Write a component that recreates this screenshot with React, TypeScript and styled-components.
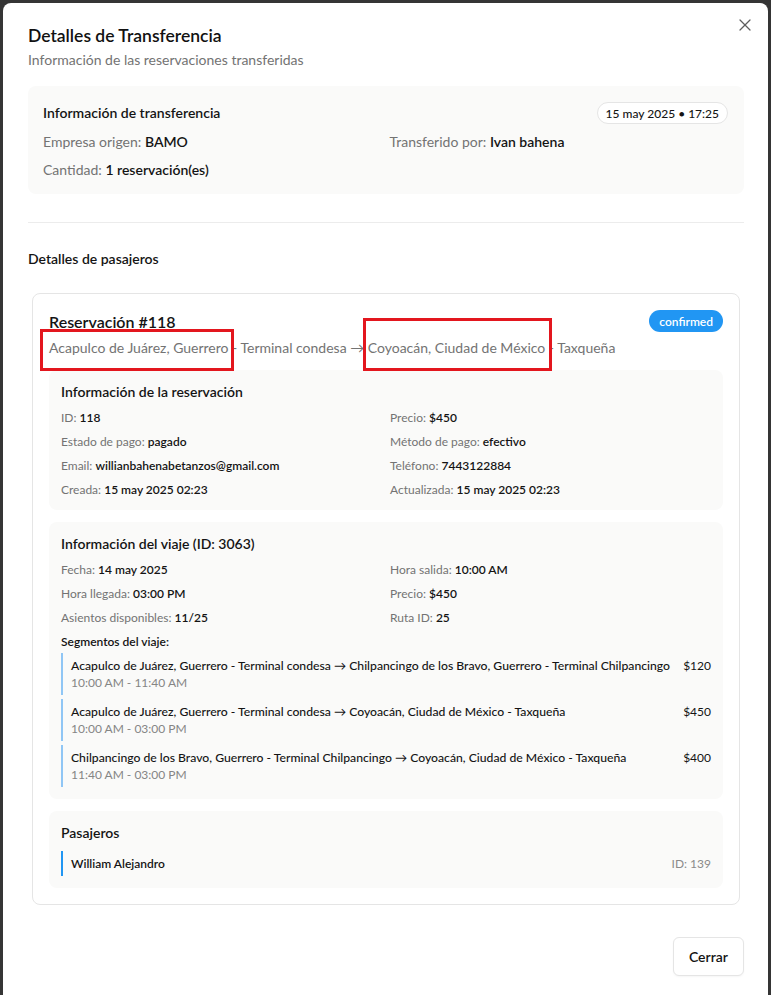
import React from 'react';
import styled, { createGlobalStyle } from 'styled-components';
import { X } from 'lucide-react';

const GlobalStyle = createGlobalStyle`
	html, body {
		margin: 0;
		padding: 0;
		background: #353535;
	}
	body {
		font-family: Lato, 'Liberation Sans', Arial, sans-serif;
		color: #141414;
	}
	* {
		box-sizing: border-box;
	}
`;

const reservationRows = [
	['ID', '118', 'Precio', '$450'],
	['Estado de pago', 'pagado', 'Método de pago', 'efectivo'],
	['Email', 'willianbahenabetanzos@gmail.com', 'Teléfono', '7443122884'],
	['Creada', '15 may 2025 02:23', 'Actualizada', '15 may 2025 02:23'],
];

const tripRows = [
	['Fecha', '14 may 2025', 'Hora salida', '10:00 AM'],
	['Hora llegada', '03:00 PM', 'Precio', '$450'],
	['Asientos disponibles', '11/25', 'Ruta ID', '25'],
];

const segments = [
	{
		route: 'Acapulco de Juárez, Guerrero - Terminal condesa → Chilpancingo de los Bravo, Guerrero - Terminal Chilpancingo',
		time: '10:00 AM - 11:40 AM',
		price: '$120',
	},
	{
		route: 'Acapulco de Juárez, Guerrero - Terminal condesa → Coyoacán, Ciudad de México - Taxqueña',
		time: '10:00 AM - 03:00 PM',
		price: '$450',
	},
	{
		route: 'Chilpancingo de los Bravo, Guerrero - Terminal Chilpancingo → Coyoacán, Ciudad de México - Taxqueña',
		time: '11:40 AM - 03:00 PM',
		price: '$400',
	},
];

const App = () => {
	return (
		<Page>
			<GlobalStyle />
			<Modal>
				<CloseButton aria-label="Cerrar">
					<X size={20} strokeWidth={1.5} />
				</CloseButton>
				<Title>Detalles de Transferencia</Title>
				<Subtitle>Información de las reservaciones transferidas</Subtitle>

				<TransferCard>
					<CardHead>
						<CardTitle>Información de transferencia</CardTitle>
						<DateBadge>15 may 2025 • 17:25</DateBadge>
					</CardHead>
					<TransferGrid>
						<Field $size={14}>
							<Label>Empresa origen: </Label>
							<Value>BAMO</Value>
						</Field>
						<Field $size={14}>
							<Label>Transferido por: </Label>
							<Value>Ivan bahena</Value>
						</Field>
						<Field $size={14}>
							<Label>Cantidad: </Label>
							<Value>1 reservación(es)</Value>
						</Field>
					</TransferGrid>
				</TransferCard>

				<Divider />

				<SectionTitle>Detalles de pasajeros</SectionTitle>

				<List>
					<ReservationCard>
						<ResHead>
							<ResTitle>Reservación #118</ResTitle>
							<StatusBadge>confirmed</StatusBadge>
						</ResHead>
						<Route>Acapulco de Juárez, Guerrero - Terminal condesa → Coyoacán, Ciudad de México - Taxqueña</Route>

						<InfoBox>
							<BoxTitle>Información de la reservación</BoxTitle>
							<InfoGrid>
								{reservationRows.map(([l1, v1, l2, v2]) => (
									<React.Fragment key={l1}>
										<Field $size={12}>
											<Label>{l1}: </Label>
											<Value>{v1}</Value>
										</Field>
										<Field $size={12}>
											<Label>{l2}: </Label>
											<Value>{v2}</Value>
										</Field>
									</React.Fragment>
								))}
							</InfoGrid>
						</InfoBox>

						<InfoBox>
							<BoxTitle>Información del viaje (ID: 3063)</BoxTitle>
							<InfoGrid>
								{tripRows.map(([l1, v1, l2, v2]) => (
									<React.Fragment key={l1}>
										<Field $size={12}>
											<Label>{l1}: </Label>
											<Value>{v1}</Value>
										</Field>
										<Field $size={12}>
											<Label>{l2}: </Label>
											<Value>{v2}</Value>
										</Field>
									</React.Fragment>
								))}
							</InfoGrid>
							<SegmentsLabel>Segmentos del viaje:</SegmentsLabel>
							<Segments>
								{segments.map((s) => (
									<Segment key={s.route}>
										<SegmentText>
											<SegmentRoute>{s.route}</SegmentRoute>
											<SegmentTime>{s.time}</SegmentTime>
										</SegmentText>
										<SegmentPrice>{s.price}</SegmentPrice>
									</Segment>
								))}
							</Segments>
						</InfoBox>

						<InfoBox>
							<BoxTitle>Pasajeros</BoxTitle>
							<PassengerRow>
								<PassengerName>William Alejandro</PassengerName>
								<PassengerId>ID: 139</PassengerId>
							</PassengerRow>
						</InfoBox>

						{/* red annotation boxes from the screenshot */}
						<Highlight $left={7} $top={35} $width={194} $height={42} />
						<Highlight $left={330} $top={24} $width={189} $height={53} />
					</ReservationCard>
				</List>

				<Footer>
					<CloseAction>Cerrar</CloseAction>
				</Footer>
			</Modal>
		</Page>
	);
};

export default App;

const Page = styled.div`
	padding: 3px 3px 0;
	min-height: 100vh;
`;

const Modal = styled.div`
	position: relative;
	background: #ffffff;
	border-radius: 8px 8px 0 0;
	padding: 19px 24px 19px 25px;
	min-height: 992px;
`;

const CloseButton = styled.button`
	position: absolute;
	top: 12px;
	right: 13px;
	width: 20px;
	height: 20px;
	padding: 0;
	border: none;
	background: transparent;
	color: #5f5f5f;
	display: flex;
	align-items: center;
	justify-content: center;
	cursor: pointer;
`;

const Title = styled.h2`
	margin: 0;
	font-size: 17.5px;
	line-height: 27px;
	font-weight: 600;
	color: #111;
`;

const Subtitle = styled.p`
	margin: 1px 0 0;
	font-size: 14px;
	line-height: 20px;
	color: #737373;
`;

const TransferCard = styled.div`
	margin-top: 16px;
	background: #fafaf9;
	border-radius: 8px;
	padding: 16px 16px 14px 15px;
`;

const CardHead = styled.div`
	display: flex;
	justify-content: space-between;
	align-items: center;
	height: 22px;
`;

const CardTitle = styled.h3`
	margin: 0;
	font-size: 14px;
	line-height: 20px;
	font-weight: 600;
	color: #141414;
`;

const DateBadge = styled.span`
	display: inline-flex;
	align-items: center;
	height: 22px;
	padding: 0 8px;
	border: 1px solid #e5e5e5;
	border-radius: 999px;
	background: #fff;
	font-size: 12px;
	font-weight: 500;
	color: #141414;
`;

const TransferGrid = styled.div`
	display: grid;
	grid-template-columns: 1fr 1fr;
	gap: 8px;
	margin-top: 8px;
`;

const Field = styled.div<{ $size: number }>`
	font-size: ${(p) => p.$size}px;
	line-height: ${(p) => (p.$size > 12 ? 20 : 16)}px;
	white-space: nowrap;
`;

const Label = styled.span`
	color: #737373;
`;

const Value = styled.span`
	color: #141414;
	font-weight: 600;
`;

const Divider = styled.hr`
	margin: 28px 0 26px;
	border: none;
	height: 1px;
	background: #ececec;
`;

const SectionTitle = styled.h3`
	margin: 0 0 24px;
	font-size: 14px;
	line-height: 20px;
	font-weight: 600;
	color: #141414;
`;

const List = styled.div`
	padding: 0 4px;
`;

const ReservationCard = styled.div`
	position: relative;
	border: 1px solid #e5e5e5;
	border-radius: 8px;
	padding: 16px;
`;

const ResHead = styled.div`
	display: flex;
	justify-content: space-between;
	align-items: flex-start;
`;

const ResTitle = styled.h4`
	margin: 0;
	font-size: 16px;
	line-height: 24px;
	font-weight: 600;
	color: #141414;
`;

const StatusBadge = styled.span`
	display: inline-flex;
	align-items: center;
	height: 22px;
	padding: 0 10px;
	border-radius: 999px;
	background: #2196f3;
	color: #fff;
	font-size: 12px;
	font-weight: 600;
`;

const Route = styled.div`
	margin-top: 4px;
	font-size: 14px;
	line-height: 20px;
	color: #737373;
`;

const InfoBox = styled.div`
	margin-top: 12px;
	background: #fafaf9;
	border-radius: 8px;
	padding: 12px;
`;

const BoxTitle = styled.h5`
	margin: 0 0 8px;
	font-size: 14px;
	line-height: 20px;
	font-weight: 600;
	color: #141414;
`;

const InfoGrid = styled.div`
	display: grid;
	grid-template-columns: 1fr 1fr;
	gap: 8px;
`;

const SegmentsLabel = styled.div`
	margin-top: 8px;
	font-size: 12px;
	line-height: 16px;
	font-weight: 600;
	color: #141414;
`;

const Segments = styled.div`
	display: flex;
	flex-direction: column;
	gap: 4px;
	margin-top: 3px;
`;

const Segment = styled.div`
	display: flex;
	justify-content: space-between;
	gap: 4px;
	border-left: 2px solid #90c6f5;
	padding: 4px 0 4px 8px;
`;

const SegmentText = styled.div`
	min-width: 0;
`;

const SegmentRoute = styled.div`
	font-size: 12.2px;
	line-height: 18px;
	font-weight: 500;
	color: #141414;
	white-space: nowrap;
`;

const SegmentTime = styled.div`
	font-size: 12px;
	line-height: 16px;
	color: #858585;
`;

const SegmentPrice = styled.div`
	flex-shrink: 0;
	font-size: 12px;
	line-height: 18px;
	color: #141414;
`;

const PassengerRow = styled.div`
	display: flex;
	justify-content: space-between;
	align-items: center;
	border-left: 2px solid #2196f3;
	padding: 4px 0 4px 8px;
	line-height: 17px;
`;

const PassengerName = styled.span`
	font-size: 12px;
	font-weight: 600;
	color: #141414;
`;

const PassengerId = styled.span`
	font-size: 12px;
	color: #8a8a8a;
`;

const Highlight = styled.div<{ $left: number; $top: number; $width: number; $height: number }>`
	position: absolute;
	left: ${(p) => p.$left}px;
	top: ${(p) => p.$top}px;
	width: ${(p) => p.$width}px;
	height: ${(p) => p.$height}px;
	border: 3px solid #e3161e;
	pointer-events: none;
`;

const Footer = styled.div`
	display: flex;
	justify-content: flex-end;
	margin-top: 32px;
`;

const CloseAction = styled.button`
	height: 39px;
	padding: 0 15px;
	border: 1px solid #e5e5e5;
	border-radius: 6px;
	background: #fff;
	box-shadow: 0 1px 2px rgba(0, 0, 0, 0.04);
	font-family: inherit;
	font-size: 14px;
	font-weight: 600;
	color: #141414;
	cursor: pointer;
`;
